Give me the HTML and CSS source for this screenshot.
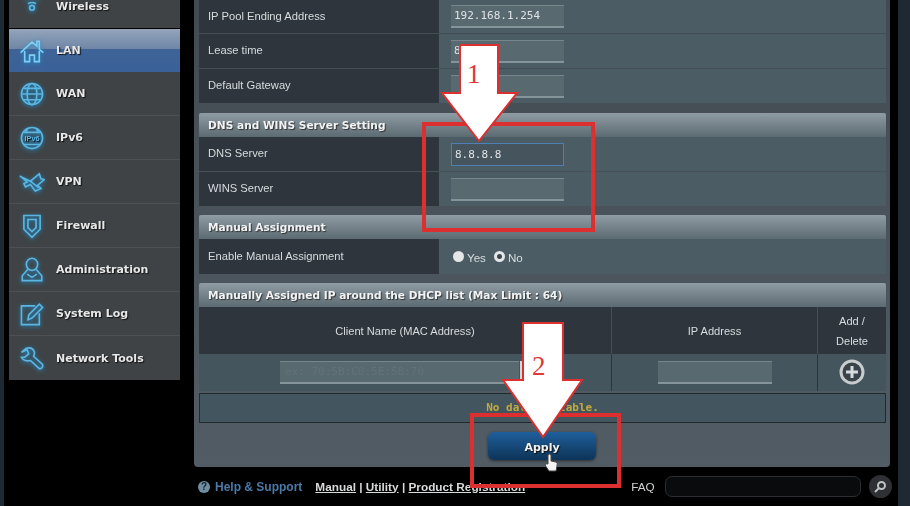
FILE: index.html
```html
<!DOCTYPE html>
<html lang="en">
<head>
  <meta charset="UTF-8">
  <title>Router LAN - DHCP Server</title>
  <link rel="stylesheet" href="styles.css">
</head>
<body>
  <div class="page">
    <!-- left menu -->
    <nav class="sidebar">
      <a class="menu-item first">
        <svg class="icon" viewBox="0 0 32 32"><path d="M2 1q14-6 28 0M7 7q9-6 18 0M11 12q5-3 10 0"/><circle cx="16" cy="17" r="3"/></svg>
        <span>Wireless</span>
      </a>
      <a class="menu-item active">
        <svg class="icon" viewBox="0 0 32 32"><path d="M2 18 16 5l6 5V4h3v10l5 4M7 16v13h6v-8h6v8h6V16"/></svg>
        <span>LAN</span>
      </a>
      <a class="menu-item">
        <svg class="icon" viewBox="0 0 32 32"><circle cx="16" cy="16" r="13"/><ellipse cx="16" cy="16" rx="6" ry="13"/><path d="M3 16h26M6 9h20M6 23h20"/></svg>
        <span>WAN</span>
      </a>
      <a class="menu-item">
        <svg class="icon" viewBox="0 0 32 32"><circle cx="16" cy="16" r="13"/><path d="M6 9h20M6 24h20M11 4 8 9M21 4l3 5"/><text x="16" y="20" class="icon-text">IPv6</text></svg>
        <span>IPv6</span>
      </a>
      <a class="menu-item">
        <svg class="icon" viewBox="0 0 32 32"><path d="M1 9l13 6 11-9 2 6 4 1-8 7 4 4-7 3-6-8-6 3-2-4 4-2-8-7zM14 15l10 8"/></svg>
        <span>VPN</span>
      </a>
      <a class="menu-item">
        <svg class="icon" viewBox="0 0 32 32"><path d="M6 3h20v17l-10 10-10-10z"/><path d="M11 8h10v10l-5 5-5-5z"/></svg>
        <span>Firewall</span>
      </a>
      <a class="menu-item">
        <svg class="icon" viewBox="0 0 32 32"><ellipse cx="16" cy="9" rx="7" ry="7.500"/><path d="M11 15 4 23v6h24v-6l-7-8M10 21l6 4 6-4"/></svg>
        <span>Administration</span>
      </a>
      <a class="menu-item">
        <svg class="icon" viewBox="0 0 32 32"><path d="M25 15v14H3V6h17"/><path d="M11 23l1-6L25 4l4 4-13 13z"/></svg>
        <span>System Log</span>
      </a>
      <a class="menu-item">
        <svg class="icon" viewBox="0 0 32 32"><path d="M3 9l6-5q8-2 10 5 0 3-1 5l11 10q1 3-2 5h-2L14 19q-8 2-11-4l4 0 5-4-2-5z"/></svg>
        <span>Network Tools</span>
      </a>
    </nav>

    <div class="content">
      <main class="panel">
        <section class="group group-top">
          <div class="row row-cut">
            <div class="label">IP Pool Ending Address</div>
            <div class="value"><div class="field">192.168.1.254</div></div>
          </div>
          <div class="row">
            <div class="label">Lease time</div>
            <div class="value"><div class="field">86400</div></div>
          </div>
          <div class="row">
            <div class="label">Default Gateway</div>
            <div class="value"><div class="field"></div></div>
          </div>
        </section>

        <section class="group">
          <h2 class="group-title">DNS and WINS Server Setting</h2>
          <div class="row">
            <div class="label">DNS Server</div>
            <div class="value"><div class="field focused">8.8.8.8</div></div>
          </div>
          <div class="row">
            <div class="label">WINS Server</div>
            <div class="value"><div class="field"></div></div>
          </div>
        </section>

        <section class="group">
          <h2 class="group-title">Manual Assignment</h2>
          <div class="row row-tall">
            <div class="label">Enable Manual Assignment</div>
            <div class="value radios">
              <span class="radio"></span><span class="radio-text">Yes</span>
              <span class="radio checked"></span><span class="radio-text">No</span>
            </div>
          </div>
        </section>

        <section class="group">
          <h2 class="group-title">Manually Assigned IP around the DHCP list (Max Limit : 64)</h2>
          <div class="ip-table">
            <div class="th">Client Name (MAC Address)</div>
            <div class="th">IP Address</div>
            <div class="th">Add /<br>Delete</div>
            <div class="td"><div class="field mac">ex: 70:5B:C0:5E:5B:70<span class="mac-btn"></span></div></div>
            <div class="td"><div class="field ip"></div></div>
            <div class="td">
              <svg class="add-btn" viewBox="0 0 26 26">
                <circle cx="13" cy="13" r="11" fill="#3a434a" stroke="#c8cccf" stroke-width="3"/>
                <path d="M13 7v12M7 13h12" stroke="#d8dbdd" stroke-width="3"/>
              </svg>
            </div>
          </div>
          <div class="no-data">No data in table.</div>
        </section>

        <div class="actions"><button class="apply">Apply</button></div>
      </main>

      <footer class="footer">
        <span class="help-icon">?</span>
        <span class="help">Help &amp; Support</span>
        <span class="links"><u>Manual</u> | <u>Utility</u> | <u>Product Registration</u></span>
        <span class="faq">FAQ</span>
        <span class="search"></span>
        <span class="search-btn">
          <svg viewBox="0 0 16 16"><circle cx="9.500" cy="6.500" r="3.500"/><path d="M7 9l-4 4"/></svg>
        </span>
      </footer>
    </div>
  </div>

  <!-- annotations drawn over the screenshot -->
  <svg class="notes" viewBox="0 0 910 506">
    <rect class="note-box" x="424" y="124" width="169" height="106"/>
    <rect class="note-box" x="472" y="415" width="147" height="71"/>
    <path class="note-arrow" d="M460 45h38v48h19l-38 48-37-48h18z"/>
    <path class="note-arrow" d="M523 323h40v57h19l-39 57-40-57h20z"/>
    <!-- hand cursor on Apply -->
    <path class="note-hand" d="M548 455q1-2 3 0v6l5 1q2 1 1 4l-1 5h-7l-4-6q0-2 3-1z"/>
  </svg>
  <span class="note-num one">1</span>
  <span class="note-num two">2</span>
</body>
</html>
```

FILE: styles.css
```css
html, body {
  margin: 0;
  padding: 0;
  height: 506px;
  overflow: hidden;
}

body {
  background: #1d2a33;
}

.page {
  display: flex;
  height: 506px;
  width: 894px;
  margin-left: 4px;
  background: #000;
  filter: blur(0.6px);
  font-family: "Liberation Sans", Arial, sans-serif;
  color: #d8dcde;
}

/* Left menu */
.sidebar {
  width: 171px;
  height: 380px;
  margin-left: 5px;
  flex: none;
  background: #3f4345;
}

.menu-item {
  display: flex;
  align-items: center;
  height: 43px;
  border-bottom: 1px solid #4e5153;
  font: bold 11px "DejaVu Sans", Verdana, sans-serif;
  color: #e8e8e8;
  text-shadow: 1px 1px 1px #111;
}

.menu-item span {
  margin-left: 11px;
}

.menu-item.first {
  height: 28px;
  border-bottom: 0;
  align-items: flex-end;
  overflow: hidden;
}

.menu-item.first span {
  margin-bottom: 15px;
}

.menu-item.first .icon {
  margin-bottom: 8px;
}

.menu-item:last-child {
  border-bottom: 0;
  height: 44px;
}

.menu-item.active {
  background: linear-gradient(#94a5bb 0, #6f86a6 46%, #3e6397 47%, #3a6299 100%);
  border-top: 1px solid #000;
  border-bottom: 0;
  height: 43px;
}

.icon {
  width: 26px;
  height: 26px;
  margin-left: 10px;
  flex: none;
  fill: none;
  stroke: #5cb6e2;
  stroke-width: 2;
  filter: drop-shadow(0 1px 2px #1f8fd0);
}

.active .icon {
  stroke: #7fd0f0;
}

.icon-text {
  font: bold 9px "Liberation Sans", sans-serif;
  fill: #5cb6e2;
  stroke: none;
  text-anchor: middle;
}

/* Main area */
.content {
  margin-left: 14px;
  width: 700px;
  flex: none;
}

.panel {
  width: 696px;
  height: 467px;
  box-sizing: border-box;
  padding: 0 4px 0 5px;
  background: linear-gradient(#434b52, #515c64);
  border-radius: 0 0 4px 4px;
}

.group {
  margin-bottom: 9px;
}

.group-top {
  margin-bottom: 10px;
}

.group-title {
  margin: 0;
  height: 24px;
  padding-left: 9px;
  border-radius: 2px 2px 0 0;
  background: linear-gradient(#8f9ca3, #5c6a71);
  font: bold 10.6px/24px "DejaVu Sans", Verdana, sans-serif;
  color: #f2f3f4;
  text-shadow: 1px 1px 1px #333;
}

.row {
  display: flex;
  height: 34px;
  background: #2e353d;
  font-size: 11.2px;
}

.row + .row {
  margin-top: 1px;
}

.row-cut {
  height: 33px;
}

.row-tall {
  height: 35px;
}

.label {
  width: 231px;
  padding: 0 0 2px 9px;
  display: flex;
  align-items: center;
}

.value {
  flex: 1;
  display: flex;
  align-items: center;
  padding-left: 12px;
  background: #4b5c64;
}

.field {
  width: 113px;
  height: 23px;
  padding-left: 3px;
  box-sizing: border-box;
  background: #586970;
  border-top: 1px solid #76868b;
  border-bottom: 2px solid #84949a;
  font: 11px/20px "DejaVu Sans Mono", "Liberation Mono", monospace;
  color: #dfe3e5;
}

.field.focused {
  background: #46555d;
  border: 1px solid #4d7fb3;
  line-height: 21px;
}

.radios {
  padding-left: 14px;
  font-size: 11.6px;
}

.radio {
  width: 11px;
  height: 11px;
  border-radius: 50%;
  background: #e4e6e7;
  margin-top: -1px;
}

.radio.checked {
  background: #3b474e;
  border: 3px solid #e4e6e7;
  width: 5px;
  height: 5px;
}

.radio-text {
  margin: 2px 8px 0 3px;
}

.ip-table {
  display: grid;
  grid-template-columns: 413px 206px 68px;
  grid-template-rows: 47px 37px;
  text-align: center;
}

.th {
  background: #2e353d;
  border-right: 1px solid #464f57;
  display: flex;
  align-items: center;
  justify-content: center;
  font-size: 11.1px;
  line-height: 20px;
}

.td {
  background: #45555d;
  border-right: 1px solid #2e353d;
  display: flex;
  align-items: center;
  justify-content: center;
}

.th:nth-child(3), .td:nth-child(6) {
  border-right: 0;
}

.field.mac {
  width: 239px;
  margin-right: 11px;
  position: relative;
  text-align: left;
  color: #62737a;
  padding-left: 5px;
}

.field.ip {
  width: 114px;
}

.mac-btn {
  position: absolute;
  right: -6px;
  top: -1px;
  width: 5px;
  height: 22px;
  background: #d4d8da;
}

.add-btn {
  width: 26px;
  height: 26px;
  margin-top: -2px;
}

.no-data {
  height: 30px;
  margin-top: 2px;
  background: #43555e;
  border: 1px solid #23292f;
  box-sizing: border-box;
  text-align: center;
  font: bold 11px/28px "DejaVu Sans Mono", "Liberation Mono", monospace;
  color: #c4a93e;
}

.actions {
  display: flex;
  justify-content: center;
  margin-top: 1px;
  padding-right: 1px;
}

.apply {
  width: 108px;
  height: 28px;
  padding: 3px 0 0;
  border: 0;
  border-radius: 6px;
  background: linear-gradient(#1f5f9c, #0d3357);
  box-shadow: 0 1px 3px #2a2f33;
  font: bold 11px "DejaVu Sans", Verdana, sans-serif;
  color: #eef1f3;
  text-shadow: 1px 1px 1px #111;
}

/* Footer under the panel */
.footer {
  display: flex;
  align-items: center;
  height: 39px;
  font-size: 11.8px;
  font-weight: bold;
  color: #d8dadb;
}

.help-icon {
  width: 12px;
  height: 12px;
  margin-left: 4px;
  border-radius: 50%;
  background: #6f8ea3;
  color: #1a2228;
  font-size: 10px;
  line-height: 12px;
  text-align: center;
}

.help {
  margin-left: 5px;
  color: #4a7aa8;
  font-size: 12px;
}

.links {
  margin-left: 13px;
  width: 316px;
}

.faq {
  font-weight: normal;
  color: #d0d3d5;
  font-size: 11.7px;
}

.search {
  width: 196px;
  height: 21px;
  margin-left: 10px;
  box-sizing: border-box;
  background: #0a0b0c;
  border: 1px solid #2a2e31;
  border-radius: 7px;
}

.search-btn {
  width: 23px;
  height: 23px;
  margin-left: 8px;
  border-radius: 50%;
  background: #2e3033;
  display: flex;
  align-items: center;
  justify-content: center;
  flex: none;
}

.search-btn svg {
  width: 16px;
  height: 16px;
  fill: none;
  stroke: #c0c2c4;
  stroke-width: 2;
}

/* Annotations */
.notes {
  position: absolute;
  left: 0;
  top: 0;
  width: 910px;
  height: 506px;
  filter: blur(0.4px);
}

.note-box {
  fill: none;
  stroke: #dc2f2f;
  stroke-width: 4;
}

.note-arrow {
  fill: #fff;
  stroke: #dc2f2f;
  stroke-width: 2;
}

.note-hand {
  fill: #f4f4f4;
  stroke: #444;
  stroke-width: 1;
}

.note-num {
  position: absolute;
  font: 27px "Liberation Serif", serif;
  color: #dc3a3a;
}

.note-num.one {
  left: 467px;
  top: 59px;
}

.note-num.two {
  left: 532px;
  top: 351px;
}
```
